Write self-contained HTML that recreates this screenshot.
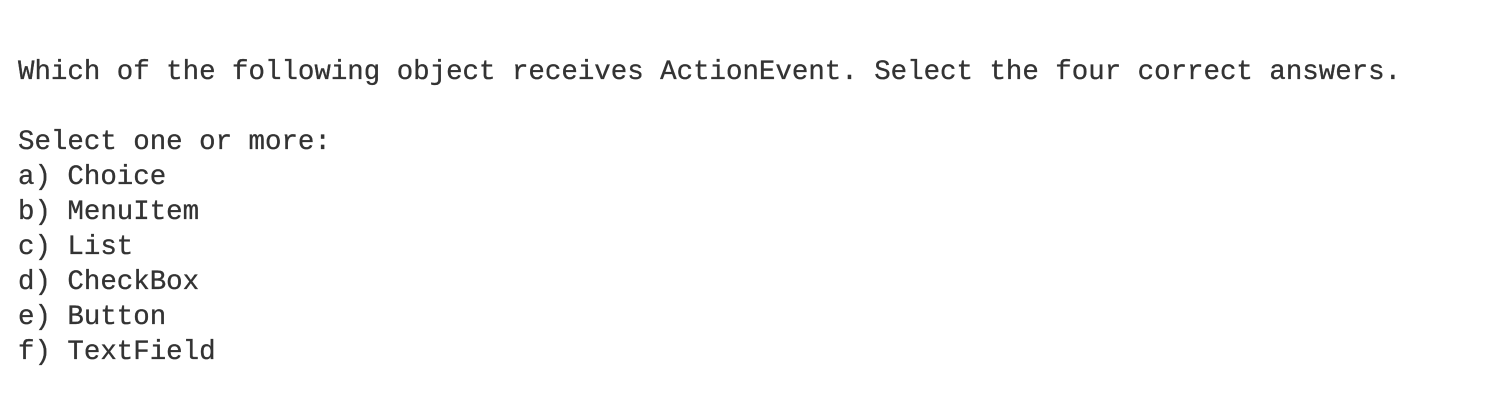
<!DOCTYPE html>
<html><head><meta charset="utf-8"><style>
html,body{margin:0;padding:0;background:#fff;width:1485px;height:403px;overflow:hidden}
pre{position:absolute;left:18px;top:55px;margin:0;font-family:"Liberation Mono",monospace;font-size:27.45px;line-height:35px;color:#333;-webkit-text-stroke:0.3px #333}
</style></head><body>
<pre>Which of the following object receives ActionEvent. Select the four correct answers.

Select one or more:
a) Choice
b) MenuItem
c) List
d) CheckBox
e) Button
f) TextField</pre>
</body></html>
